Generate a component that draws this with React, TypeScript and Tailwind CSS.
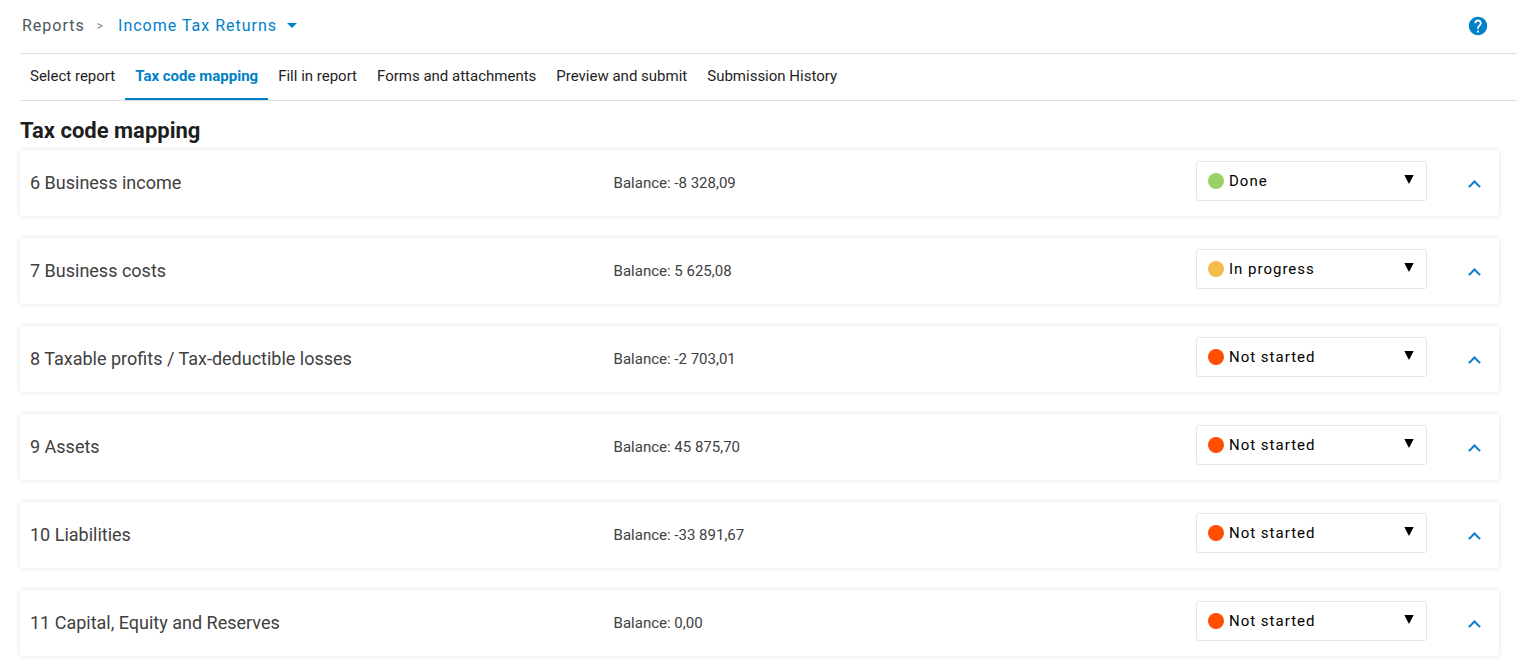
import { useState } from "react";

type Status = "done" | "progress" | "todo";

const tabs = [
  "Select report",
  "Tax code mapping",
  "Fill in report",
  "Forms and attachments",
  "Preview and submit",
  "Submission History",
];

const sections: { title: string; balance: string; status: Status }[] = [
  { title: "6 Business income", balance: "-8 328,09", status: "done" },
  { title: "7 Business costs", balance: "5 625,08", status: "progress" },
  { title: "8 Taxable profits / Tax-deductible losses", balance: "-2 703,01", status: "todo" },
  { title: "9 Assets", balance: "45 875,70", status: "todo" },
  { title: "10 Liabilities", balance: "-33 891,67", status: "todo" },
  { title: "11 Capital, Equity and Reserves", balance: "0,00", status: "todo" },
];

const dotColor: Record<Status, string> = {
  done: "bg-[#98d167]",
  progress: "bg-[#f4bc4a]",
  todo: "bg-[#ff5000]",
};

function StatusSelect({ initial, label }: { initial: Status; label: string }) {
  const [status, setStatus] = useState<Status>(initial);
  return (
    <div className="relative w-[231px]">
      <select
        aria-label={label}
        value={status}
        onChange={(e) => setStatus(e.target.value as Status)}
        className="block h-10 w-full appearance-none rounded-[3px] border border-[#e4e4e4] bg-white pr-8 pl-8 text-[15px] tracking-[1px] text-black"
      >
        <option value="done">Done</option>
        <option value="progress">In progress</option>
        <option value="todo">Not started</option>
      </select>
      <span className={`pointer-events-none absolute top-3 left-3 size-4 rounded-full ${dotColor[status]}`} />
      <svg className="pointer-events-none absolute top-[14px] right-[13px] h-[9px] w-[10px]" viewBox="0 0 10 9" aria-hidden="true">
        <path d="M.3 0h9.4L5 9z" fill="#000" />
      </svg>
    </div>
  );
}

function Section({ title, balance, status }: { title: string; balance: string; status: Status }) {
  const [open, setOpen] = useState(false);
  return (
    <section className="grid h-[66px] grid-cols-[2fr_3fr] items-center bg-white shadow-[0_0_5px_rgba(0,0,0,0.12)]">
      <h2 className="pl-2.5 text-lg text-[#404040]">{title}</h2>
      <div className="flex items-center pr-1 pl-0.5">
        <p className="flex-1 text-[15px] text-[#404040]">Balance: {balance}</p>
        <div className="pb-1">
          <StatusSelect initial={status} label={`Status of ${title}`} />
        </div>
        <button
          type="button"
          aria-label={`Toggle ${title}`}
          aria-expanded={open}
          onClick={() => setOpen(!open)}
          className="ml-7 flex h-10 w-10 items-center justify-center pt-0.5"
        >
          <svg className="h-2 w-[13px]" viewBox="0 0 13 8" fill="none" aria-hidden="true">
            <path d="M.9 7.1 6.5 1.5l5.6 5.600" stroke="#0081c8" strokeWidth="2" />
          </svg>
        </button>
      </div>
    </section>
  );
}

export default function App() {
  const [active, setActive] = useState(1);
  return (
    <div className="min-h-screen bg-white pr-[3px] pb-4 pl-5 font-[Roboto,sans-serif]">
      <header className="flex h-[53px] items-center justify-between pr-7 pb-0.5 pl-0.5">
        <nav aria-label="Breadcrumb" className="flex items-center text-base tracking-[1px]">
          <a href="#reports" className="text-[#4b575e]">Reports</a>
          <span className="pr-3.5 pl-3 text-xs text-[#808080]">&gt;</span>
          <button type="button" className="flex items-center gap-2.5 tracking-[1px] text-[#0081c8]">
            Income Tax Returns
            <svg className="h-[5px] w-[10px]" viewBox="0 0 10 5" aria-hidden="true">
              <path d="M0 0h10L5 5z" fill="currentColor" />
            </svg>
          </button>
        </nav>
        <button type="button" aria-label="Help" className="text-[#0081c8]">
          <svg className="size-[22px]" viewBox="0 0 24 24" fill="currentColor" aria-hidden="true">
            <path d="M12 2C6.480 2 2 6.480 2 12s4.480 10 10 10 10-4.480 10-10S17.520 2 12 2zm1 17h-2v-2h2v2zm2.070-7.750-.9.920C13.450 12.900 13 13.500 13 15h-2v-.5c0-1.100.45-2.100 1.170-2.830l1.240-1.260c.37-.36.59-.86.59-1.410 0-1.100-.9-2-2-2s-2 .9-2 2H8c0-2.210 1.790-4 4-4s4 1.790 4 4c0 .88-.36 1.680-.93 2.250z" />
          </svg>
        </button>
      </header>
      <nav aria-label="Report steps" className="flex h-12 border-y border-[#e0e0e0]">
        {tabs.map((tab, i) => (
          <button
            key={tab}
            type="button"
            onClick={() => setActive(i)}
            className={
              i === active
                ? "border-b-2 border-[#0081c8] px-2.5 text-[15px] font-bold text-[#0081c8]"
                : "border-b-2 border-transparent px-2.5 text-[15px] text-[#1e1e1e]"
            }
          >
            {tab}
          </button>
        ))}
      </nav>
      <main className="pr-[18px]">
        <h1 className="pt-3.5 pb-[3px] text-[22px] leading-8 font-bold text-[#1e1e1e]">Tax code mapping</h1>
        <div className="flex flex-col gap-[22px]">
          {sections.map((s) => (
            <Section key={s.title} {...s} />
          ))}
        </div>
      </main>
    </div>
  );
}
